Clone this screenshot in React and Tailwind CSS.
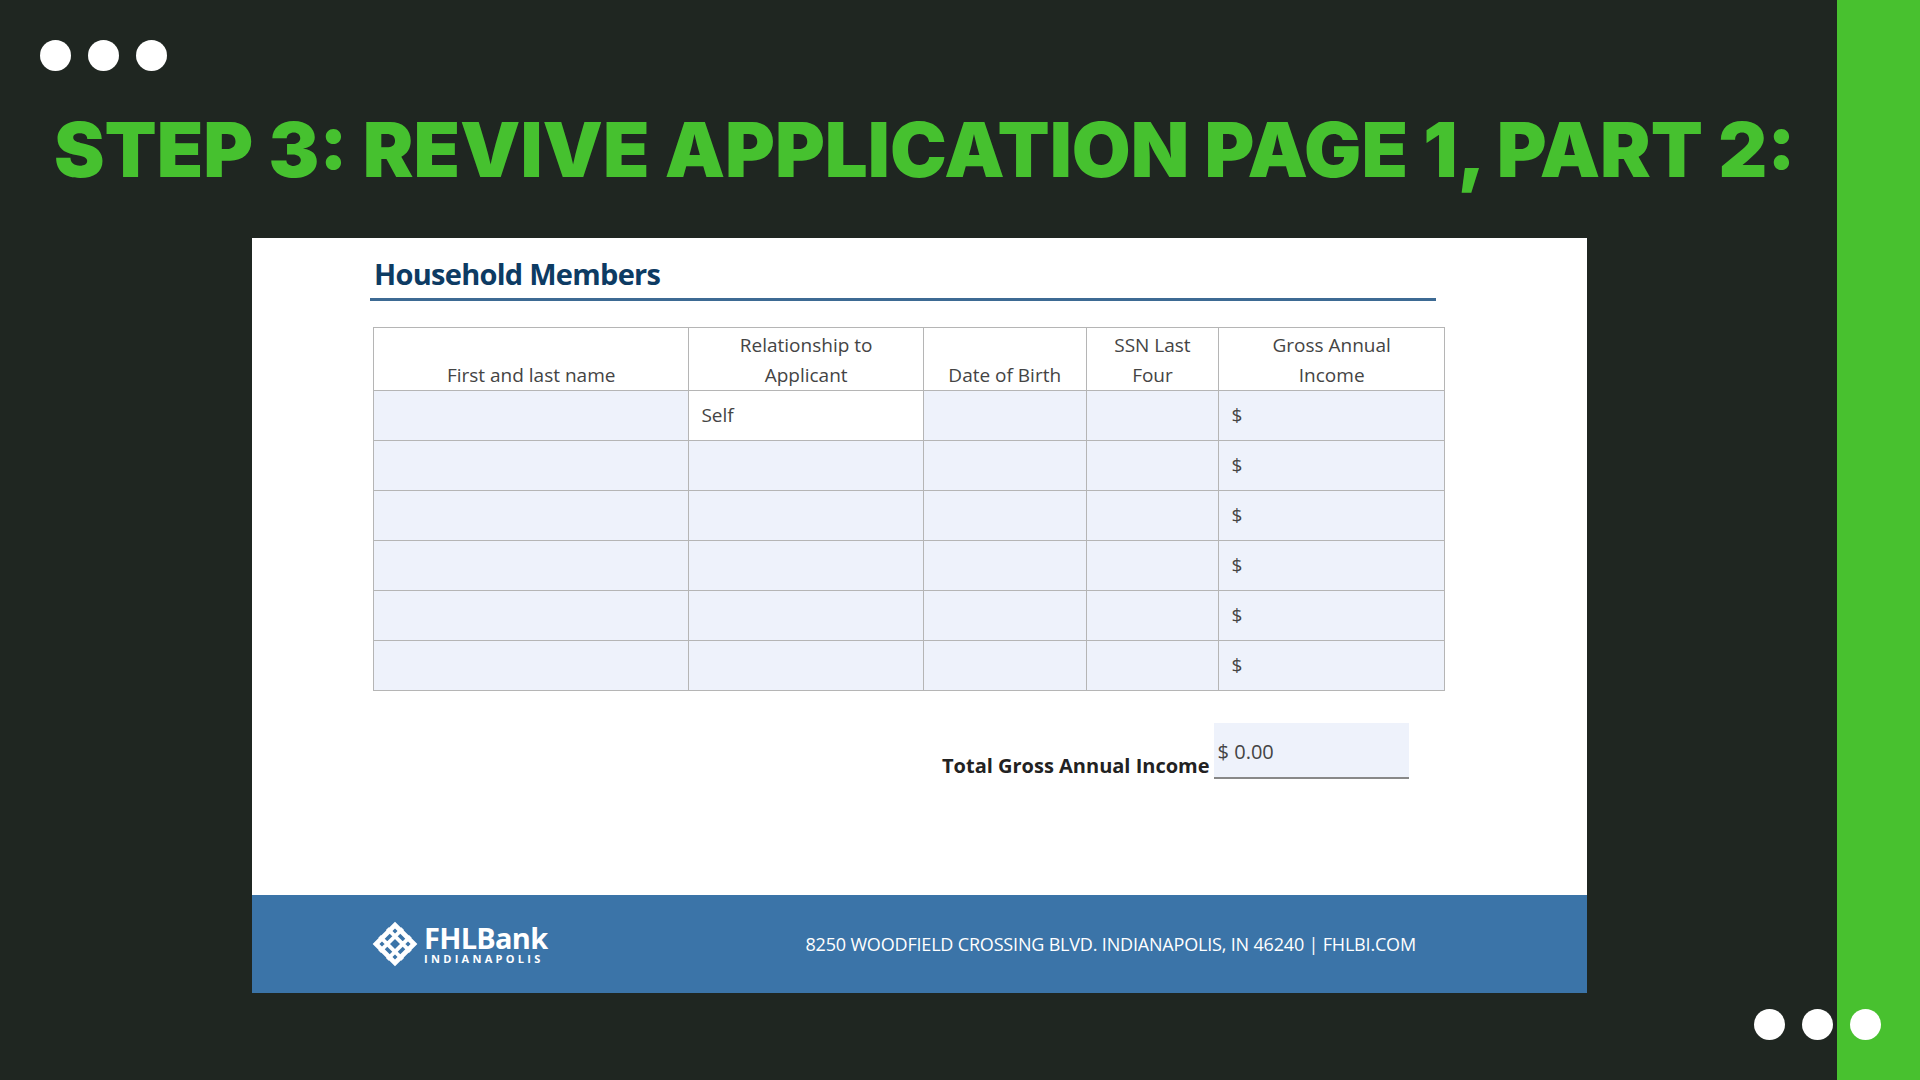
import React from 'react'

const cols = ['w-[316px]', 'w-[235px]', 'w-[163px]', 'w-[133px]', 'w-[225px]']

function Logo() {
  return (
    <div className='flex items-center gap-1.5 text-white'>
      <svg width="46" height="46" viewBox="0 0 48 48" fill="none" stroke="white" strokeWidth="5">
        <rect x="10" y="10" width="28" height="28" transform="rotate(45 24 24)" />
        <path d="M8 16 L32 40 M16 8 L40 32 M8 32 L32 8 M16 40 L40 16" strokeWidth="4" />
      </svg>
      <div className='flex flex-col leading-none'>
        <span className='text-[29px] font-bold tracking-tight leading-[30px]'>FHLBank</span>
        <span className='text-[11px] font-bold tracking-[0.3em] leading-[12px]'>INDIANAPOLIS</span>
      </div>
    </div>
  )
}

function App() {
  const rows = [0, 1, 2, 3, 4, 5]
  return (
    <div className='w-[1920px] h-[1080px] bg-[#1f2621] flex overflow-hidden' style={{ fontFamily: '"Open Sans", sans-serif' }}>
      <div className='w-[1837px] flex flex-col'>
        <div className='flex gap-[17px] pl-[40px] pt-[40px]'>
          <div className='w-[31px] h-[31px] rounded-full bg-white' />
          <div className='w-[31px] h-[31px] rounded-full bg-white' />
          <div className='w-[31px] h-[31px] rounded-full bg-white' />
        </div>
        <h1 className='pl-[54px] mt-[40px] text-[#46c12f] text-[76px] font-black leading-none whitespace-nowrap' style={{ fontFamily: 'Inter, sans-serif' }}>
          STEP 3: REVIVE APPLICATION PAGE 1, PART 2:
        </h1>
        <div className='ml-[252px] mt-[51px] w-[1335px] h-[755px] bg-white flex flex-col'>
          <div className='flex-1 pl-[118px] pt-[14px]'>
            <div className='w-[1066px] border-b-[3px] border-[#3d6a93] pl-[4px] pb-[2px]'>
              <span className='text-[29px] font-bold text-[#0d3b63] tracking-tight'>Household Members</span>
            </div>
            <div className='ml-[3px] mt-[26px] w-[1072px] border border-[#b5b5b5] text-[19px] text-[#444]'>
              <div className='flex h-[62px]'>
                {['First and last name', 'Relationship to Applicant', 'Date of Birth', 'SSN Last Four', 'Gross Annual Income'].map((h, i) => (
                  <div key={h} className={`${cols[i]} flex items-end justify-center text-center leading-[30px] ${i === 4 ? 'px-10' : 'px-2'} ${i < 4 ? 'border-r border-[#b5b5b5]' : ''}`}>
                    {h}
                  </div>
                ))}
              </div>
              {rows.map(r => (
                <div key={r} className='flex h-[50px] border-t border-[#b5b5b5]'>
                  {cols.map((c, i) => (
                    <div key={i} className={`${c} flex items-center px-3 ${i < 4 ? 'border-r border-[#b5b5b5]' : ''} ${r === 0 && i === 1 ? 'bg-white' : 'bg-[#eef2fb]'}`}>
                      {r === 0 && i === 1 ? 'Self' : ''}
                      {i === 4 ? '$' : ''}
                    </div>
                  ))}
                </div>
              ))}
            </div>
            <div className='flex items-end mt-[32px] ml-[572px]'>
              <span className='text-[20px] font-bold text-[#222] mr-[4px] mb-[-2px]'>Total Gross Annual Income</span>
              <div className='w-[195px] h-[56px] bg-[#eef2fb] border-b-2 border-[#888] flex items-start pt-[14px] px-1 text-[20px] text-[#444]'>$ 0.00</div>
            </div>
          </div>
          <div className='h-[98px] bg-[#3b74a8] flex items-center pl-[120px]'>
            <Logo />
            <span className='ml-[258px] text-white text-[18px] tracking-[-0.01em]'>8250 WOODFIELD CROSSING BLVD. INDIANAPOLIS, IN 46240 | FHLBI.COM</span>
          </div>
        </div>
      </div>
      <div className='flex-1 bg-[#48c12f]' />
      <div className='absolute left-[1754px] top-[1009px] flex gap-[17px]'>
        <div className='w-[31px] h-[31px] rounded-full bg-white' />
        <div className='w-[31px] h-[31px] rounded-full bg-white' />
        <div className='w-[31px] h-[31px] rounded-full bg-white' />
      </div>
    </div>
  )
}

export default App
